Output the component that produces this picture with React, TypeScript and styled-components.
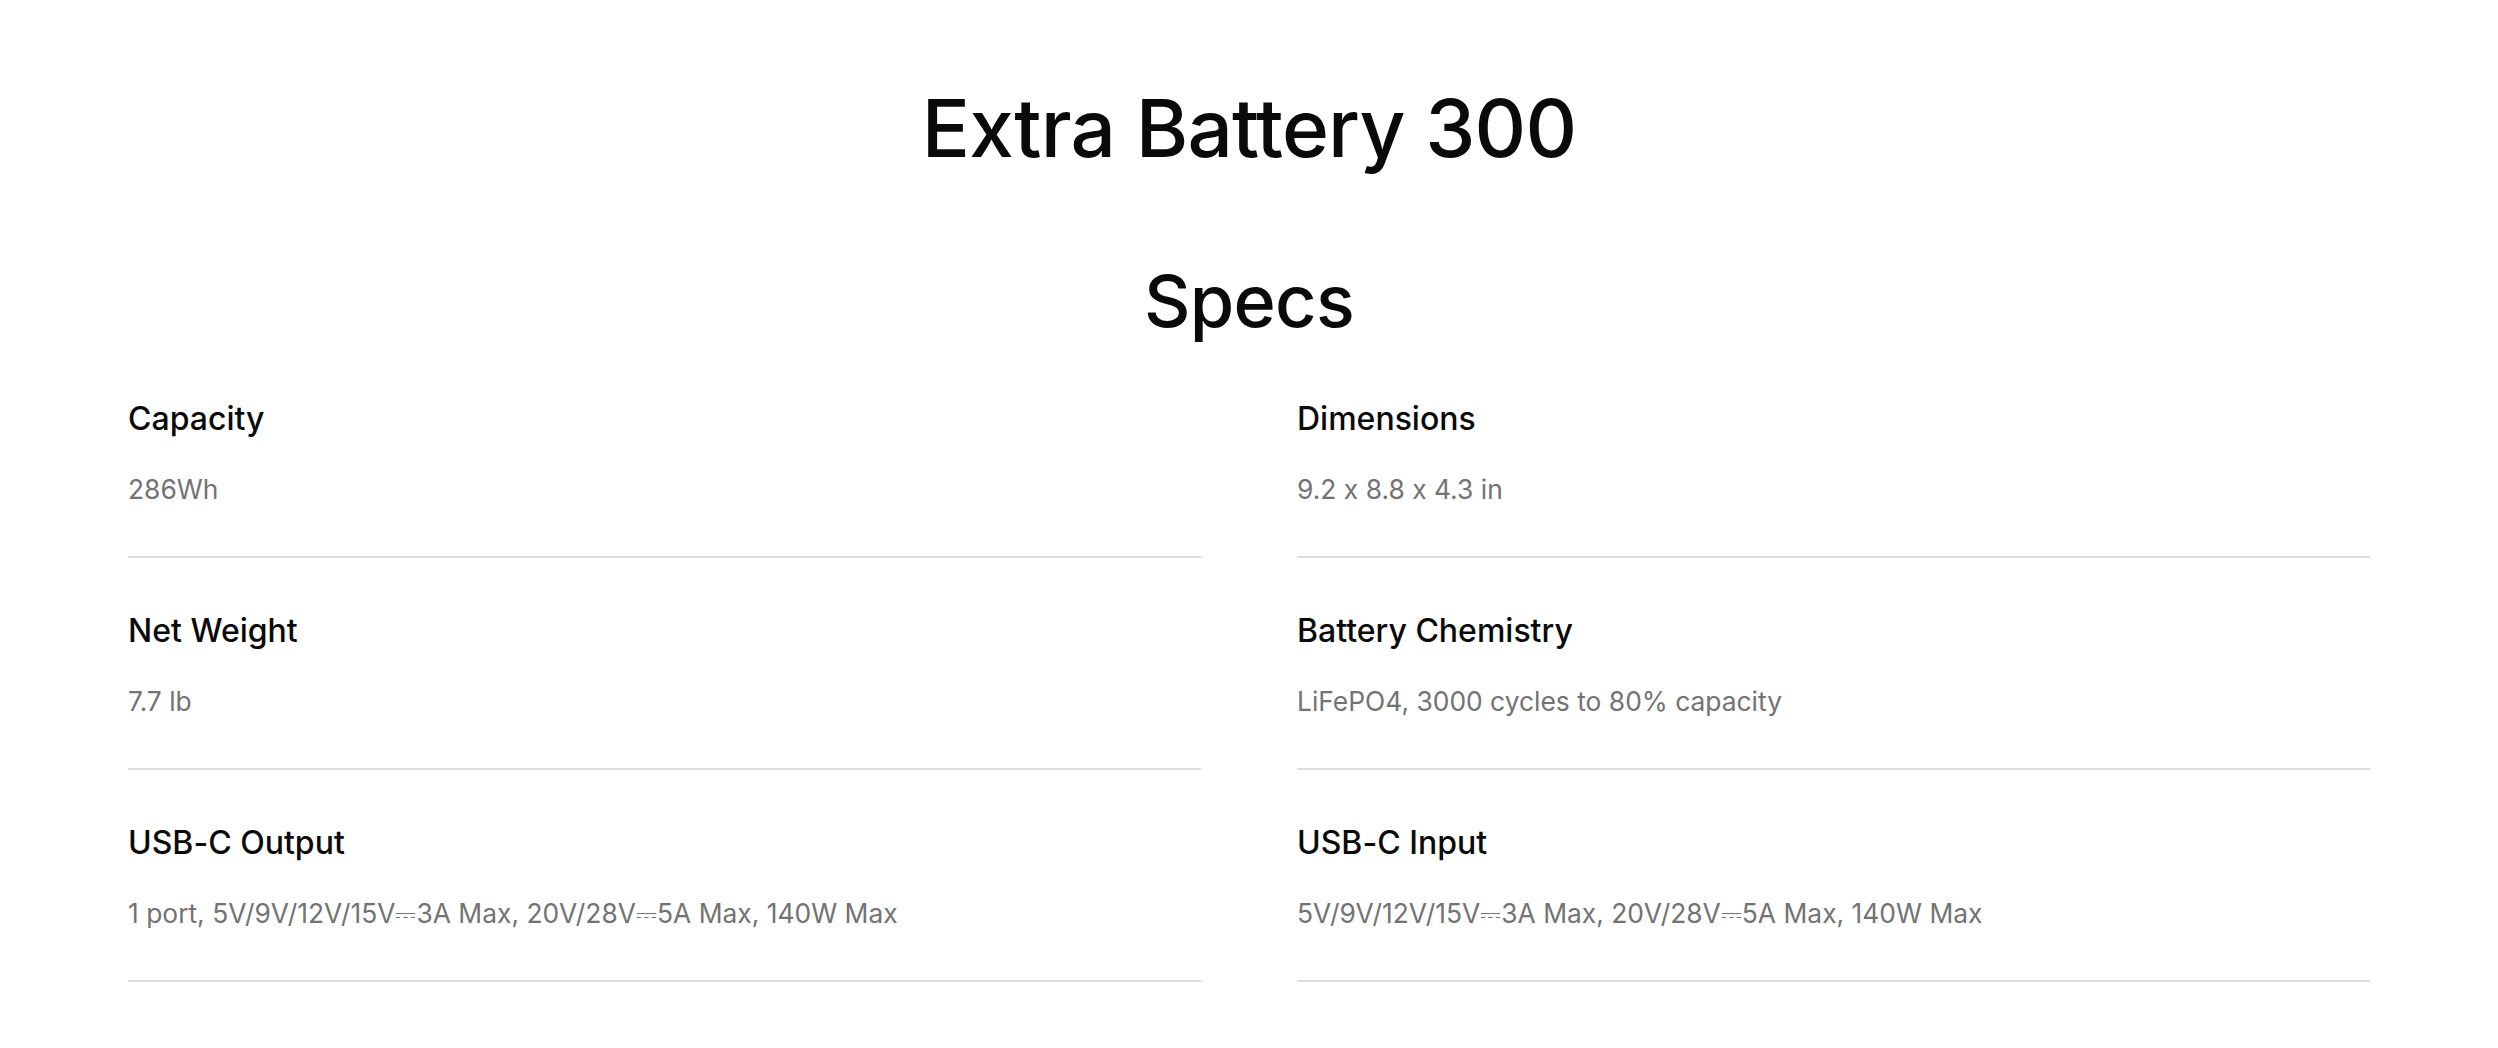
import React from 'react';
import styled, { createGlobalStyle } from 'styled-components';

const specs = [
  { label: 'Capacity', value: '286Wh' },
  { label: 'Dimensions', value: '9.2 x 8.8 x 4.3 in' },
  { label: 'Net Weight', value: '7.7 lb' },
  { label: 'Battery Chemistry', value: 'LiFePO4, 3000 cycles to 80% capacity' },
  { label: 'USB-C Output', value: '1 port, 5V/9V/12V/15V⎓3A Max, 20V/28V⎓5A Max, 140W Max' },
  { label: 'USB-C Input', value: '5V/9V/12V/15V⎓3A Max, 20V/28V⎓5A Max, 140W Max' },
];

const App = () => {
  return (
    <>
      <GlobalStyle />
      <Page>
        <Title>Extra Battery 300</Title>
        <SectionTitle>Specs</SectionTitle>
        <SpecGrid>
          {specs.map((s) => (
            <SpecItem key={s.label}>
              <SpecLabel>{s.label}</SpecLabel>
              <SpecValue>{s.value}</SpecValue>
            </SpecItem>
          ))}
        </SpecGrid>
      </Page>
    </>
  );
};

export default App;

const GlobalStyle = createGlobalStyle`
  body {
    margin: 0;
    background: #fff;
    font-family: Inter, "Noto Sans", "DejaVu Sans", sans-serif;
    font-feature-settings: "calt" 0;
    color: #0a0a0a;
  }
`;

const Page = styled.main`
  width: 2242px;
  margin: 0 auto;
  padding-top: 80px;
`;

const Title = styled.h1`
  margin: 0;
  text-align: center;
  font-size: 80px;
  line-height: 96px;
  font-weight: 500;
  letter-spacing: -0.01em;
`;

const SectionTitle = styled.h2`
  margin: 82px 0 0;
  text-align: center;
  font-size: 72px;
  line-height: 86px;
  font-weight: 500;
  letter-spacing: -0.01em;
`;

const SpecGrid = styled.div`
  display: grid;
  grid-template-columns: 1fr 1fr;
  column-gap: 96px;
  row-gap: 53px;
  margin-top: 55px;
`;

const SpecItem = styled.div`
  display: flex;
  flex-direction: column;
  gap: 30px;
  padding-bottom: 47px;
  border-bottom: 2px solid #dcdcdc;
`;

const SpecLabel = styled.div`
  font-size: 32px;
  line-height: 40px;
  font-weight: 540;
  color: #0a0a0a;
`;

const SpecValue = styled.div`
  font-size: 26.4px;
  line-height: 40px;
  font-weight: 400;
  color: #737373;
`;
